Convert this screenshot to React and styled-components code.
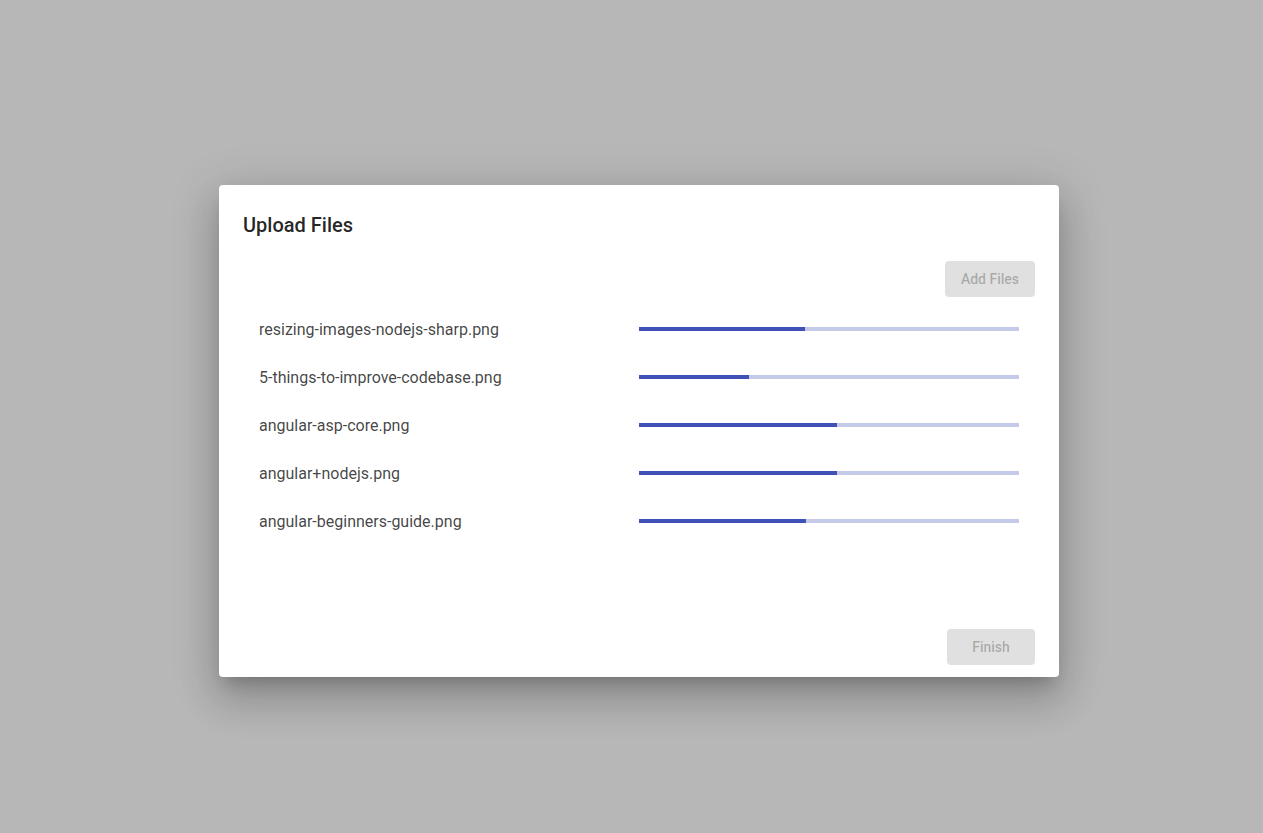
import React from "react";
import styled, { createGlobalStyle } from "styled-components";

const GlobalStyle = createGlobalStyle`
  html, body {
    margin: 0;
    padding: 0;
    height: 100%;
  }
  body {
    background: #b7b7b7;
    font-family: Roboto, "Helvetica Neue", sans-serif;
  }
`;

const Backdrop = styled.div`
  box-sizing: border-box;
  width: 100vw;
  height: 100vh;
  padding: 185px 0 0 219px;
  display: flex;
  align-items: flex-start;
  background: #b7b7b7;
`;

const Dialog = styled.div`
  box-sizing: border-box;
  width: 840px;
  height: 492px;
  padding: 24px 24px 12px;
  background: #fff;
  border-radius: 4px;
  display: flex;
  flex-direction: column;
  box-shadow: 0 11px 15px -7px rgba(0, 0, 0, 0.2),
    0 24px 38px 3px rgba(0, 0, 0, 0.14), 0 9px 46px 8px rgba(0, 0, 0, 0.12);
`;

const Title = styled.h2`
  margin: 0 0 20px;
  font-size: 20px;
  font-weight: 500;
  line-height: 32px;
  color: rgba(0, 0, 0, 0.87);
`;

const Toolbar = styled.div`
  display: flex;
  justify-content: flex-end;
`;

const FlatButton = styled.button`
  box-sizing: border-box;
  height: 36px;
  min-width: ${(p) => p.$width || 88}px;
  padding: 0 16px;
  border: none;
  border-radius: 4px;
  background: rgba(0, 0, 0, 0.12);
  color: rgba(0, 0, 0, 0.26);
  font-family: Roboto, sans-serif;
  font-size: 14px;
  font-weight: 500;
  line-height: 36px;
  cursor: default;
`;

const FileList = styled.div`
  padding-top: 8px;
  display: flex;
  flex-direction: column;
`;

const Row = styled.div`
  height: 48px;
  padding: 0 16px;
  display: flex;
  align-items: center;
`;

const FileName = styled.span`
  flex: 1;
  font-size: 16px;
  color: rgba(0, 0, 0, 0.74);
`;

const Track = styled.div`
  flex: 1;
  height: 4px;
  background: #c5cae9;
  overflow: hidden;
`;

const Fill = styled.div`
  height: 100%;
  background: #3f51b5;
`;

const Actions = styled.div`
  margin-top: auto;
  display: flex;
  justify-content: flex-end;
`;

const files = [
  { name: "resizing-images-nodejs-sharp.png", progress: 43.7 },
  { name: "5-things-to-improve-codebase.png", progress: 29 },
  { name: "angular-asp-core.png", progress: 52 },
  { name: "angular+nodejs.png", progress: 52 },
  { name: "angular-beginners-guide.png", progress: 44 },
];

export default function App() {
  return (
    <>
      <GlobalStyle />
      <Backdrop>
        <Dialog>
          <Title>Upload Files</Title>
          <Toolbar>
            <FlatButton $width={90}>Add Files</FlatButton>
          </Toolbar>
          <FileList>
            {files.map((f) => (
              <Row key={f.name}>
                <FileName>{f.name}</FileName>
                <Track>
                  <Fill style={{ width: `${f.progress}%` }} />
                </Track>
              </Row>
            ))}
          </FileList>
          <Actions>
            <FlatButton>Finish</FlatButton>
          </Actions>
        </Dialog>
      </Backdrop>
    </>
  );
}
